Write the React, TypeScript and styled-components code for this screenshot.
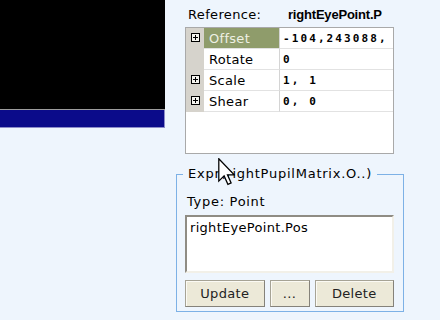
import React from 'react';
import styled, { createGlobalStyle } from 'styled-components';

const GlobalStyle = createGlobalStyle`
  html, body {
    margin: 0;
    padding: 0;
    background: #eef5fd;
  }
  body {
    width: 440px;
    height: 320px;
    overflow: hidden;
    font-family: "DejaVu Sans", Verdana, sans-serif;
    font-size: 13px;
    color: #000;
  }
`;

const Page = styled.div`
  position: relative;
  display: flex;
  align-items: flex-start;
  gap: 11px;
  width: 440px;
  height: 320px;
`;

const LeftPane = styled.div`
  display: flex;
  flex-direction: column;
  width: 165px;
`;

const Viewport = styled.div`
  height: 109px;
  background: #000;
  border-bottom: 1px solid #9c9c9c;
`;

const StatusBar = styled.div`
  height: 17px;
  background: #0b0b8a;
  border-right: 1px solid #8c8cc8;
  border-bottom: 1px solid #8c8cc8;
`;

const RightPane = styled.div`
  display: flex;
  flex-direction: column;
  width: 228px;
`;

const RefRow = styled.div`
  display: flex;
  height: 20px;
  padding: 7px 0 0 12px;
  line-height: 16px;
`;

const RefLabel = styled.span`
  width: 100px;
  letter-spacing: 0.35px;
`;

const RefValue = styled.span`
  white-space: nowrap;
  font-family: "Liberation Sans", Arial, sans-serif;
  font-weight: bold;
  font-size: 13px;
  letter-spacing: -0.2px;
`;

const Grid = styled.div`
  margin-left: 9px;
  width: 207px;
  height: 125px;
  background: #fff;
  border: 1px solid #a9a9a9;
`;

const Row = styled.div`
  display: flex;
  height: 21px;
`;

const Gutter = styled.div`
  position: relative;
  width: 18px;
  background: #d6d3cc;
`;

const Expander = styled.span`
  position: absolute;
  left: 5px;
  top: 5px;
  width: 7px;
  height: 7px;
  border: 1px solid #000;
  background: #f4f3ee;

  &::before, &::after {
    content: '';
    position: absolute;
    background: #000;
  }
  &::before {
    left: 1px;
    top: 3px;
    width: 5px;
    height: 1px;
  }
  &::after {
    left: 3px;
    top: 1px;
    width: 1px;
    height: 5px;
  }
`;

const NameCell = styled.div<{ $selected?: boolean }>`
  width: 70px;
  padding-left: 5px;
  line-height: 21px;
  letter-spacing: 0.3px;
  background: ${p => (p.$selected ? '#8f9c6b' : '#fff')};
  color: ${p => (p.$selected ? '#eef0e4' : '#000')};
  border-right: 1px solid #d4d4d4;
  border-bottom: 1px solid #e2e2e2;
`;

const ValueCell = styled.div`
  flex: 1;
  padding-left: 3px;
  line-height: 21px;
  white-space: nowrap;
  font-family: "DejaVu Sans Mono", monospace;
  font-weight: bold;
  font-size: 11px;
  letter-spacing: 2.1px;
  border-bottom: 1px solid #e2e2e2;
`;

const ExprBox = styled.fieldset`
  margin: 12px 0 0 0;
  padding: 0 8px 4px 8px;
  min-width: 0;
  border: 1px solid #7db1e6;
`;

const ExprTitle = styled.legend`
  margin-left: -2px;
  padding: 0 5px;
  line-height: 16px;
  letter-spacing: 0.75px;
  white-space: nowrap;
`;

const TypeLine = styled.div`
  margin-top: 12px;
  padding-left: 2px;
  line-height: 16px;
  letter-spacing: 0.7px;
`;

const ExprInput = styled.textarea`
  display: block;
  box-sizing: border-box;
  width: 209px;
  height: 58px;
  margin-top: 5px;
  padding: 3px 3px;
  resize: none;
  font-family: "DejaVu Sans", Verdana, sans-serif;
  font-size: 13px;
  line-height: 16px;
  letter-spacing: 0.3px;
  color: #000;
  background: #fff;
  border: 2px solid;
  border-color: #8f8c84 #f2f0e8 #f2f0e8 #8f8c84;
  outline: none;
`;

const ButtonRow = styled.div`
  display: grid;
  grid-template-columns: 1fr 40px 1fr;
  gap: 5px;
  width: 209px;
  margin-top: 7px;
`;

const Button = styled.button`
  height: 27px;
  padding: 0;
  font-family: "DejaVu Sans", Verdana, sans-serif;
  font-size: 13px;
  letter-spacing: 0.3px;
  color: #222;
  background: #ece9d8;
  border: 1px solid #a6a395;
  border-right-color: #85827a;
  border-bottom-color: #85827a;
  box-shadow: inset 1px 1px 0 #fbfaf4;
`;

const Cursor = styled.svg`
  position: absolute;
  left: 218px;
  top: 158px;
`;

const rows = [
  { name: 'Offset', value: '-104,243088,', expandable: true, selected: true },
  { name: 'Rotate', value: '0', expandable: false },
  { name: 'Scale', value: '1, 1', expandable: true },
  { name: 'Shear', value: '0, 0', expandable: true },
];

export default function App() {
  return (
    <Page>
      <GlobalStyle />
      <LeftPane>
        <Viewport />
        <StatusBar />
      </LeftPane>
      <RightPane>
        <RefRow>
          <RefLabel>Reference:</RefLabel>
          <RefValue>rightEyePoint.P</RefValue>
        </RefRow>
        <Grid>
          {rows.map(r => (
            <Row key={r.name}>
              <Gutter>{r.expandable && <Expander />}</Gutter>
              <NameCell $selected={r.selected}>{r.name}</NameCell>
              <ValueCell>{r.value}</ValueCell>
            </Row>
          ))}
        </Grid>
        <ExprBox>
          <ExprTitle>Expr(rightPupilMatrix.O..)</ExprTitle>
          <TypeLine>Type: Point</TypeLine>
          <ExprInput readOnly defaultValue="rightEyePoint.Pos" />
          <ButtonRow>
            <Button>Update</Button>
            <Button>...</Button>
            <Button>Delete</Button>
          </ButtonRow>
        </ExprBox>
      </RightPane>
      <Cursor width="17" height="28" viewBox="0 0 12 20">
        <path
          d="M0.5 0.5 L0.5 16.5 L4.3 12.8 L7 18.8 L9.3 17.8 L6.7 12 L11.5 12 Z"
          fill="#fff"
          stroke="#000"
          strokeWidth="0.9"
          strokeLinejoin="miter"
        />
      </Cursor>
    </Page>
  );
}
